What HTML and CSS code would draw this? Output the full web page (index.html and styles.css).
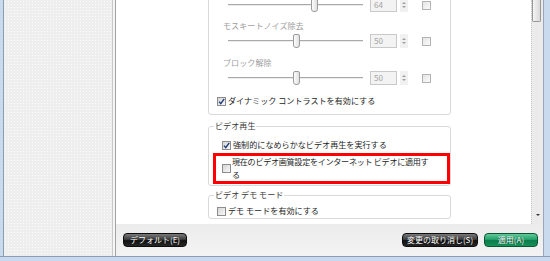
FILE: index.html
```html
<!DOCTYPE html>
<html lang="ja">
<head>
<meta charset="utf-8">
<title>ビデオ設定</title>
<link rel="stylesheet" href="styles.css">
</head>
<body>
<div class="window">
  <div class="frame-l"></div>
  <div class="sidebar"></div>
  <div class="sep"></div>
  <div class="pane">
    <div class="content">
      <div class="scroll">
        <div class="group group1">
          <div class="slider-row">
            <div class="slider"><span class="thumb" style="left:64%"></span></div>
            <span class="value">64</span>
            <span class="spin"><i class="up"></i><i class="down"></i></span>
            <span class="cb dis side"></span>
          </div>
          <div class="item first">
            <div class="slabel">モスキートノイズ除去</div>
            <div class="slider-row">
              <div class="slider"><span class="thumb" style="left:50%"></span></div>
              <span class="value">50</span>
              <span class="spin"><i class="up"></i><i class="down"></i></span>
              <span class="cb dis side"></span>
            </div>
          </div>
          <div class="item">
            <div class="slabel">ブロック解除</div>
            <div class="slider-row">
              <div class="slider"><span class="thumb" style="left:50%"></span></div>
              <span class="value">50</span>
              <span class="spin"><i class="up"></i><i class="down"></i></span>
              <span class="cb dis side"></span>
            </div>
          </div>
          <div class="check-row">
            <span class="cb on"><svg width="7" height="7" viewBox="0 0 7 7"><path d="M1 3.6 L2.8 5.6 L6.2 0.8" fill="none" stroke="#1d3b78" stroke-width="1.4"/></svg></span>
            <span>ダイナミック コントラストを有効にする</span>
          </div>
        </div>

        <fieldset class="group">
          <legend>ビデオ再生</legend>
          <div class="check-row indent">
            <span class="cb on"><svg width="7" height="7" viewBox="0 0 7 7"><path d="M1 3.6 L2.8 5.6 L6.2 0.8" fill="none" stroke="#1d3b78" stroke-width="1.4"/></svg></span>
            <span>強制的になめらかなビデオ再生を実行する</span>
          </div>
          <div class="highlight">
            <span class="cb"></span>
            <span class="wrap">現在のビデオ画質設定をインターネット ビデオに適用す<br>る</span>
          </div>
        </fieldset>

        <fieldset class="group group3">
          <legend>ビデオ デモ モード</legend>
          <div class="check-row">
            <span class="cb"></span>
            <span>デモ モードを有効にする</span>
          </div>
        </fieldset>
      </div>
      <div class="scrollbar">
        <div class="sb-thumb"></div>
        <div class="sb-track"></div>
        <div class="sb-down"><i></i></div>
      </div>
    </div>
    <div class="footer">
      <button class="btn dark def">デフォルト(E)</button>
      <span class="spacer"></span>
      <button class="btn dark undo">変更の取り消し(S)</button>
      <button class="btn green apply">適用(A)</button>
    </div>
  </div>
  <div class="frame-r"></div>
  <div class="frame-b"></div>
</div>
</body>
</html>
```
FILE: styles.css
```css
* { box-sizing: border-box; }
html, body { margin: 0; padding: 0; }
body {
  width: 550px;
  height: 261px;
  overflow: hidden;
  background: #fff;
  font-family: "Noto Sans CJK JP", "Noto Sans", sans-serif;
  font-size: 8.1px;
  color: #1e1e1e;
}
.window {
  display: grid;
  grid-template-columns: 4px 108px 4px 427px 7px;
  grid-template-rows: 256px 5px;
  width: 550px;
  height: 261px;
}
.frame-l { background: #c9daee; border-right: 1px solid #8b9eb6; }
.frame-r { background: #c9daee; border-left: 1px solid #9aa7b6; }
.frame-b { grid-column: 1 / -1; background: #c9daee; border-top: 1px solid #8b9eb6; }
.sidebar {
  background-color: #eeeeee;
  background-image: radial-gradient(circle, #fcfcfc 0.7px, transparent 1px);
  background-size: 3px 3px;
}
.sep { background: #f6f6f6; border-left: 1px solid #c9c9c9; border-right: 1px solid #a3a3a3; }

.pane { display: flex; flex-direction: column; min-width: 0; }
.content { display: flex; height: 224px; background: #fff; }
.scroll { flex: 1; overflow: hidden; padding-left: 92px; }

/* groups */
.group {
  width: 243px;
  border: 1px solid #d9d9d9;
  border-radius: 3px;
}
.group1 { margin-top: -12px; padding: 8px 0 7px 8px; }
.item { margin-top: 8px; }
.item.first { margin-top: 7px; }
.slabel { height: 12px; line-height: 12px; margin-left: 6px; color: #9d9d9d; }
.slider-row { display: flex; align-items: center; height: 16px; padding-left: 11px; }
.item .slider-row { margin-top: 1px; }
.slider { position: relative; width: 135px; height: 14px; flex: none; }
.slider::before {
  content: "";
  position: absolute;
  left: 0; right: 0; top: 6px;
  height: 1px;
  background: #a9a9a9;
  box-shadow: 0 1px 0 #ececec;
}
.thumb {
  position: absolute;
  top: 0;
  width: 7px;
  height: 14px;
  margin-left: -3px;
  border: 1px solid #9b9b9b;
  border-radius: 2px 2px 3px 3px;
  background: linear-gradient(to right, #fdfdfd, #e0e0e0);
}
.value {
  flex: none;
  margin-left: 7px;
  width: 27px;
  height: 14px;
  border: 1px solid #c9c9c9;
  background: #f3f3f3;
  color: #a3a3a3;
  padding-left: 3px;
  line-height: 12px;
}
.spin {
  flex: none;
  margin-left: 3px;
  width: 8px;
  height: 14px;
  background: #f1f1f1;
  display: flex;
  flex-direction: column;
  align-items: center;
  justify-content: center;
  gap: 2px;
}
.spin i { display: block; width: 0; height: 0; border-left: 2px solid transparent; border-right: 2px solid transparent; }
.spin .up { border-bottom: 2px solid #9d9d9d; }
.spin .down { border-top: 2px solid #9d9d9d; }

.cb {
  flex: none;
  width: 9px;
  height: 9px;
  border: 1px solid #8d8d8d;
  background: linear-gradient(135deg, #d6d6d6, #f8f8f8);
  margin-right: 2px;
  display: flex;
  align-items: center;
  justify-content: center;
}
.cb.dis { border-color: #b3b3b3; background: linear-gradient(135deg, #e4e4e4, #fbfbfb); }
.cb.side { margin-left: 14px; margin-right: 0; }
.cb svg { display: block; }

.check-row { display: flex; align-items: center; height: 12px; line-height: 12px; white-space: nowrap; }
.group1 .check-row { margin-top: 9px; }

fieldset.group {
  margin: 6px 0 0 0;
  min-width: 0;
  padding: 8px 0 1px 0;
}
fieldset.group3 { margin-top: 4px; padding-top: 5px; }
legend {
  margin-left: 5px;
  padding: 0 1px;
  height: 10px;
  line-height: 10px;
  color: #3a3a3a;
}
.check-row.indent { margin-left: 13px; }
.group3 .check-row { margin-left: 8px; }

.highlight {
  margin: 2px 0 0 4px;
  border: 3px solid #ff0000;
  padding: 0 6px 0 6px;
  display: flex;
  align-items: center;
  line-height: 12.5px;
}
.highlight .cb { margin-right: 1px; }
.wrap { flex: 1; min-width: 0; white-space: nowrap; letter-spacing: -0.3px; }

/* scrollbar */
.scrollbar {
  width: 12px;
  display: flex;
  flex-direction: column;
  background: #ebebeb;
  border-left: 1px dotted #c8c8c8;
}
.sb-thumb {
  height: 22px;
  width: 9px;
  border: 1px solid #979797;
  border-top: none;
  border-radius: 0 0 2px 2px;
  background: linear-gradient(to right, #f4f4f4, #d9d9d9);
}
.sb-track { flex: 1; }
.sb-down { height: 14px; display: flex; justify-content: center; padding-top: 4px; }
.sb-down i { display: block; width: 0; height: 0; border-left: 2px solid transparent; border-right: 2px solid transparent; border-top: 2px solid #333; }

/* footer */
.footer {
  height: 32px;
  display: flex;
  align-items: center;
  gap: 6px;
  padding: 0 5px 0 7px;
  background: linear-gradient(#ececec, #f3f3f3);
}
.spacer { flex: 1; }
.btn {
  height: 14px;
  padding: 0;
  border-radius: 4px;
  border: 1px solid #0d0d0d;
  color: #fff;
  font-family: inherit;
  font-size: 8px;
  line-height: 12px;
  text-align: center;
  text-shadow: 0 0 1px rgba(0,0,0,0.6);
}
.btn.dark { background: linear-gradient(#7a7a7a, #3c3c3c 45%, #121212 55%, #262626); }
.btn.green { background: linear-gradient(#62c99a, #25a26c 45%, #0b7b4b 55%, #169259); border-color: #0a5534; }
.btn.def { width: 64px; }
.btn.undo { width: 76px; }
.btn.apply { width: 54px; }
```
